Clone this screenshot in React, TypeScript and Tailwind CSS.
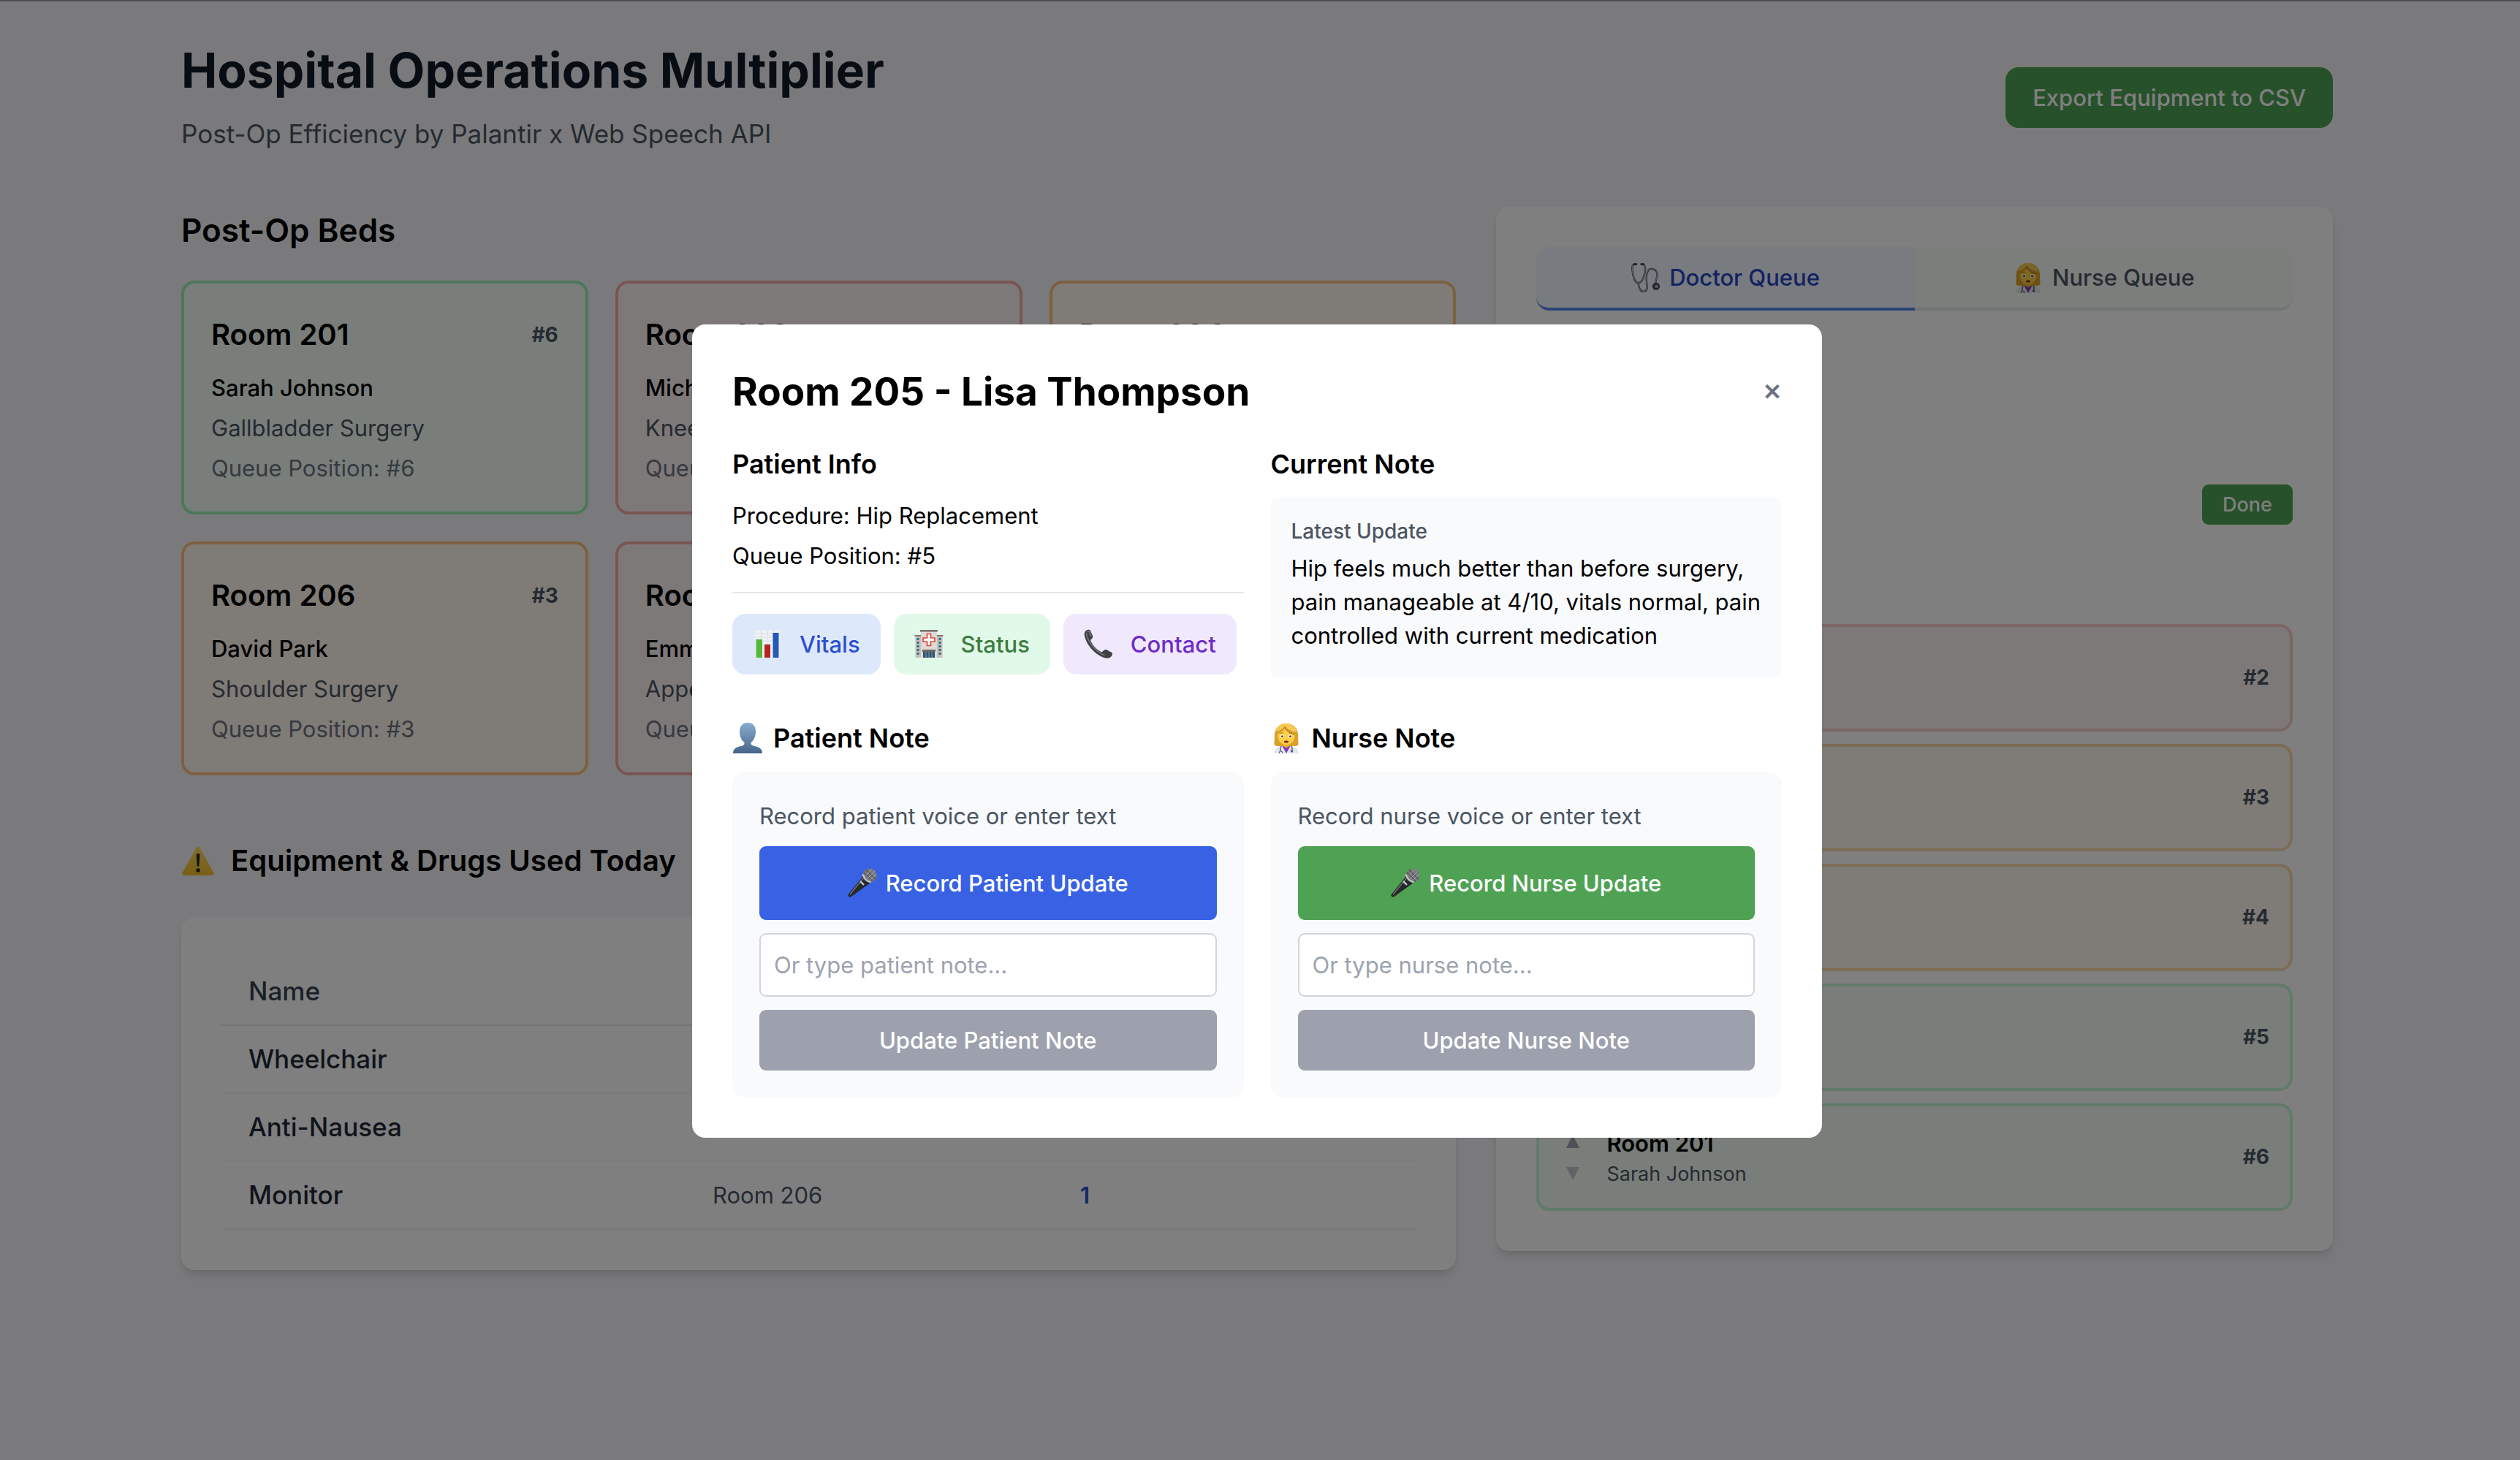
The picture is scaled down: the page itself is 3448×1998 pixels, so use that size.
import { useState } from "react";
import type { ReactNode } from "react";

type Tone = "green" | "red" | "orange";

const bedTone: Record<Tone, string> = {
  green: "border-[#98f0b2] bg-[#f2fdf5]",
  red: "border-[#f5a9a6] bg-[#fcf3f2]",
  orange: "border-[#f9c080] bg-[#fef7ee]",
};

const queueTone: Record<Tone, string> = {
  green: "border-[#c3f5d2] bg-[#f2fdf5]",
  red: "border-[#f7cbca] bg-[#fcf3f2]",
  orange: "border-[#fad8ab] bg-[#fef7ee]",
};

const beds: { room: string; name: string; procedure: string; pos: number; tone: Tone }[] = [
  { room: "Room 201", name: "Sarah Johnson", procedure: "Gallbladder Surgery", pos: 6, tone: "green" },
  { room: "Room 203", name: "Michael Chen", procedure: "Knee Surgery", pos: 1, tone: "red" },
  { room: "Room 204", name: "James Wilson", procedure: "Hernia Repair", pos: 4, tone: "orange" },
  { room: "Room 206", name: "David Park", procedure: "Shoulder Surgery", pos: 3, tone: "orange" },
  { room: "Room 207", name: "Emma Davis", procedure: "Appendectomy", pos: 2, tone: "red" },
  { room: "Room 205", name: "Lisa Thompson", procedure: "Hip Replacement", pos: 5, tone: "green" },
];

const equipment = [
  { name: "Wheelchair", room: "Room 205", qty: 1 },
  { name: "Anti-Nausea", room: "Room 201", qty: 1 },
  { name: "Monitor", room: "Room 206", qty: 1 },
];

function WarningIcon() {
  return (
    <svg viewBox="0 0 46 40" className="h-[40px] w-[46px]" aria-hidden="true">
      <defs>
        <linearGradient id="warn" x1="0" y1="0" x2="0" y2="1">
          <stop offset="0" stopColor="#fbd95a" />
          <stop offset="1" stopColor="#f3bf2c" />
        </linearGradient>
      </defs>
      <path d="M20.6 2.2a2.8 2.8 0 0 1 4.8 0l19 34a2.6 2.6 0 0 1-2.3 3.8H3.9a2.6 2.6 0 0 1-2.3-3.8z" fill="url(#warn)" />
      <path d="M20.6 12.5a2.4 2.4 0 0 1 4.8 0l-1 14a1.4 1.4 0 0 1-2.8 0z" fill="#2c2410" />
      <circle cx="23" cy="33" r="2.7" fill="#2c2410" />
    </svg>
  );
}

function StethoscopeIcon() {
  return (
    <svg viewBox="0 0 40 40" className="size-[40px]" fill="none" aria-hidden="true">
      <path d="M5.5 1.5C1.5 2 .8 4 1.4 9c.7 7 2.6 17 8 18.4 6-1 9-11 9.6-18C19.5 4 18.5 2 15 1.5" stroke="#4d5257" strokeWidth="2.4" />
      <path d="M5.5 1.5C1.5 2 .8 4 1.4 9c.7 7 2.6 17 8 18.4 6-1 9-11 9.6-18C19.5 4 18.5 2 15 1.5" stroke="#d5d9dc" strokeWidth="1" />
      <path d="M9.5 27c1 6 2 12 7 12 7 0 5-8 4.500-13-.6-6-.5-18 6.500-18 6 0 9 5 8 10-1 4-3 6-2 10" stroke="#4d5257" strokeWidth="2.4" />
      <path d="M9.5 27c1 6 2 12 7 12 7 0 5-8 4.500-13-.6-6-.5-18 6.500-18 6 0 9 5 8 10-1 4-3 6-2 10" stroke="#d5d9dc" strokeWidth="1" />
      <path d="M4 1.5h3M13.5 1.500h3" stroke="#30343a" strokeWidth="2.4" strokeLinecap="round" />
      <circle cx="34" cy="32" r="5" fill="#3a3d42" />
      <circle cx="34.5" cy="32" r="2.6" fill="#a9aeb3" />
    </svg>
  );
}

function NurseIcon() {
  return (
    <svg viewBox="0 0 42 42" className="size-[42px]" aria-hidden="true">
      <path d="M21 1C11 1 5.500 8 5 16c-.4 5 .2 8-.6 12-.3 2.500 1.600 4 4.600 4h24c3 0 4.900-1.500 4.600-4-.8-4-.2-7-.6-12C36.500 8 31 1 21 1z" fill="#dba02b" />
      <path d="M21 1C12 1 7.500 6 6 12c6-1 11-4 13-8 3 5 9 8 16.500 9C34 6 29 1 21 1z" fill="#f4c955" />
      <path d="M4.500 42c0-6 4-9 10-10h13c6 1 10 4 10 10z" fill="#e2e6ec" />
      <path d="M15.500 32L21 42l5.500-10z" fill="#8b35b8" />
      <path d="M17 27h8v5l-4 2.500-4-2.500z" fill="#eab42c" />
      <path d="M9.500 16c4.500-2 8-5 9.500-8 3 4 8 7 13.500 8 .8 8-4 14-11.500 14S8.700 24 9.500 16z" fill="#fbd043" />
      <path d="M18.500 6c3 5 8 9 14 10" stroke="#b9791d" strokeWidth="1.3" fill="none" />
      <ellipse cx="15.5" cy="18.5" rx="2.400" ry="2.600" fill="#fff" />
      <ellipse cx="26.500" cy="18.5" rx="2.400" ry="2.600" fill="#fff" />
      <circle cx="15.5" cy="18.7" r="1.500" fill="#5b3712" />
      <circle cx="26.500" cy="18.7" r="1.500" fill="#5b3712" />
      <path d="M13 14.800c1.200-1 3-1 4.200 0M24.800 14.800c1.200-1 3-1 4.200 0" stroke="#a8701c" strokeWidth="1" fill="none" />
      <ellipse cx="21" cy="26" rx="3" ry="1.500" fill="#7c2417" />
      <path d="M14 32c-1.500 3-1.500 4.500-.6 7M28 32c1.500 3 1.500 4.500.6 6" stroke="#5d6873" strokeWidth="1.500" fill="none" />
      <circle cx="28.500" cy="39" r="1.800" fill="#5d6873" />
      <path d="M11.500 42v-1.500c0-2 4-2 4 0V42" stroke="#5d6873" strokeWidth="1.200" fill="none" />
    </svg>
  );
}

function ChartIcon() {
  return (
    <svg viewBox="0 0 40 40" className="size-[40px]" aria-hidden="true">
      <rect x="3" y="1" width="34" height="38" fill="#eef1f5" />
      <path d="M3 6h34M3 11h34M3 16h34M3 21h34M3 26h34M3 31h34M11.5 1v38M20 1v38M28.5 1v38" stroke="#d6dbe2" strokeWidth="0.8" />
      <rect x="4.5" y="14" width="8.5" height="25" fill="#56b83a" />
      <rect x="16" y="21" width="8" height="18" fill="#b2241c" />
      <rect x="27.5" y="5" width="8" height="34" fill="#2459b8" />
    </svg>
  );
}

function HospitalIcon() {
  return (
    <svg viewBox="0 0 40 40" className="size-[40px]" aria-hidden="true">
      <rect x="1.5" y="9" width="37" height="30" fill="#c3c0b9" />
      <rect x="0.5" y="8" width="39" height="1.8" fill="#77746f" />
      <rect x="9" y="2" width="22" height="37" fill="#dcdad5" />
      <rect x="8" y="1" width="24" height="2.6" fill="#77746f" />
      <path d="M5 12v23M35 12v23" stroke="#41678a" strokeWidth="3" strokeDasharray="3 2" />
      <path d="M17.5 6.500h5v5.500H28v5h-5.500v5.500h-5V17H12v-5h5.500z" fill="#fff" stroke="#dc4640" strokeWidth="1.7" />
      <rect x="11" y="28" width="18" height="3" fill="#6d6a66" />
      <rect x="12" y="31" width="16" height="8" fill="#36536e" />
      <path d="M16 31v8M20 31v8M24 31v8" stroke="#86a3bb" strokeWidth="0.9" />
    </svg>
  );
}

function PhoneIcon() {
  return (
    <svg viewBox="0 0 40 40" className="size-[40px]" aria-hidden="true">
      <path
        d="M2 3C4 .5 7.500 0 9 2l3 7c.7 2-.3 3.600-2.200 5-.8.8-.6 2 0 3.200 3 5.600 7.500 10.300 12.500 13.400 1.500.8 2.500.9 3.500-.2 1.700-2 3.500-3 5.400-2.100l6.500 3.400c2 1.200 1.600 4-.6 6-2 1.800-4.600 2.700-7.600 1.800C16 36 3.500 22 .8 8.500.5 6 .8 4.400 2 3z"
        fill="#3f4245"
      />
      <path d="M3.500 5c1 12 12 25 25 31" stroke="#777b7f" strokeWidth="1.4" fill="none" />
      <path d="M5 3.500c1-1 2-1 2.600 0l2.400 6" stroke="#8f9397" strokeWidth="1.2" fill="none" />
    </svg>
  );
}

function PersonIcon() {
  return (
    <svg viewBox="0 0 42 42" className="size-[42px]" aria-hidden="true">
      <defs>
        <linearGradient id="bust" x1="0" y1="0" x2="0" y2="1">
          <stop offset="0" stopColor="#88add0" />
          <stop offset="1" stopColor="#48658a" />
        </linearGradient>
      </defs>
      <path
        d="M21 0c-7 0-11 4.600-11 12 0 7 2.500 12 6.200 14.800.8 2.700-.2 4.200-4.200 5.200-7 1.500-11 3.500-11 10h40c0-6.500-4-8.500-11-10-4-1-5-2.500-4.200-5.200C29.500 24 32 19 32 12 32 4.600 28 0 21 0z"
        fill="url(#bust)"
      />
    </svg>
  );
}

function MicIcon() {
  return (
    <svg viewBox="0 0 40 40" className="size-[40px]" aria-hidden="true">
      <path d="M21 11L1 35.500c-1 1.500-.6 2.500.3 3.400 1 .9 2.300 1 3.400.1L31 20z" fill="#26282b" />
      <path d="M22 13L3 36" stroke="#6d7074" strokeWidth="1.6" />
      <path d="M17 18l5 5" stroke="#c9ccd0" strokeWidth="2.4" />
      <circle cx="30" cy="10" r="9.5" fill="#77797c" />
      <path d="M22 6l12 12M25 2.500L37.500 15M21 11l8 8" stroke="#4c4e51" strokeWidth="1.2" />
      <path d="M24 17L37 4M21.500 13L33 1.500M28 19l11-11" stroke="#a5a8ab" strokeWidth="1" />
      <path d="M20.500 8.500c2 6 5 9.500 11 11" stroke="#c4c7ca" strokeWidth="2.2" fill="none" />
    </svg>
  );
}

function NotePanel({
  icon,
  title,
  who,
  recordClass,
}: {
  icon: ReactNode;
  title: string;
  who: string;
  recordClass: string;
}) {
  const [text, setText] = useState("");
  const label = who.charAt(0).toUpperCase() + who.slice(1);
  return (
    <section>
      <h3 className="flex items-center gap-[14px] text-[36px] leading-[55px] font-semibold">
        {icon}
        {title}
      </h3>
      <div className="mt-[18px] flex flex-col gap-[18px] rounded-[18px] bg-[#f9fafc] p-[37px]">
        <label htmlFor={`${who}-note`} className="text-[31px] leading-[47px] text-[#4b5563]">
          Record {who} voice or enter text
        </label>
        <button
          type="button"
          className={`flex items-center justify-center gap-[12px] rounded-[9px] py-[27px] text-[31px] leading-[47px] font-medium text-white ${recordClass}`}
        >
          <MicIcon />
          Record {label} Update
        </button>
        <input
          id={`${who}-note`}
          value={text}
          onChange={(e) => setText(e.target.value)}
          placeholder={`Or type ${who} note...`}
          className="w-full rounded-[9px] border-2 border-[#d1d5db] bg-white px-[18px] py-[18px] text-[31px] leading-[47px] placeholder:text-[#9ca3af]"
        />
        <button
          type="button"
          className="rounded-[9px] bg-[#9ca1ad] py-[18px] text-[31px] leading-[47px] font-medium text-white"
        >
          Update {label} Note
        </button>
      </div>
    </section>
  );
}

function Chip({ icon, label, className }: { icon: ReactNode; label: string; className: string }) {
  return (
    <button
      type="button"
      className={`flex items-center gap-[24px] rounded-[18px] px-[28px] py-[18px] text-[31px] leading-[47px] font-medium ${className}`}
    >
      {icon}
      {label}
    </button>
  );
}

function PatientDialog() {
  return (
    <div className="fixed inset-0 flex items-center justify-center bg-black/50 pt-[2px] pr-2">
      <div
        role="dialog"
        aria-modal="true"
        aria-labelledby="dialog-title"
        className="w-full max-w-[1546px] rounded-[18px] bg-white p-[55px]"
      >
        <header className="flex items-center justify-between">
          <h2 id="dialog-title" className="text-[53px] leading-[74px] font-bold">
            Room 205 - Lisa Thompson
          </h2>
          <button type="button" aria-label="Close" className="text-[31px] leading-[47px] font-bold text-[#6b7280]">
            ✕
          </button>
        </header>

        <div className="mt-[35px] grid grid-cols-2 gap-x-[37px] gap-y-[55px]">
          <section>
            <h3 className="text-[36px] leading-[55px] font-semibold">Patient Info</h3>
            <div className="mt-[18px] flex flex-col gap-[5px] text-[31px] leading-[50px]">
              <p>Procedure: Hip Replacement</p>
              <p>Queue Position: #5</p>
            </div>
            <div className="mt-[24px] flex gap-[18px] border-t-2 border-[#e5e7eb] pt-[28px]">
              <Chip icon={<ChartIcon />} label="Vitals" className="bg-[#dee8fb] text-[#2b4fcf]" />
              <Chip icon={<HospitalIcon />} label="Status" className="bg-[#e1f9e8] text-[#3d7c40]" />
              <Chip icon={<PhoneIcon />} label="Contact" className="bg-[#f0e8fc] text-[#6e2bc9]" />
            </div>
          </section>

          <section>
            <h3 className="text-[36px] leading-[55px] font-semibold">Current Note</h3>
            <div className="mt-[18px] rounded-[9px] bg-[#f9fafc] px-[28px] pt-[28px] pb-[35px]">
              <p className="text-[28px] leading-[37px] font-medium text-[#4b5563]">Latest Update</p>
              <p className="mt-[9px] text-[31px] leading-[46px]">
                Hip feels much better than before surgery, pain manageable at 4/10, vitals normal, pain controlled
                with current medication
              </p>
            </div>
          </section>

          <NotePanel icon={<PersonIcon />} title="Patient Note" who="patient" recordClass="bg-[#3862e3]" />
          <NotePanel icon={<NurseIcon />} title="Nurse Note" who="nurse" recordClass="bg-[#4fa254]" />
        </div>
      </div>
    </div>
  );
}

export default function App() {
  const queue = beds.filter((b) => b.pos > 1).sort((a, b) => a.pos - b.pos);
  return (
    <div className="min-h-screen border-t-2 border-[#a0a0a2] bg-[#f4f5f8] pr-2 font-['Inter',sans-serif] text-black">
      <div className="mx-auto max-w-[3054px] px-[55px] pt-[53px]">
        <header className="flex items-center justify-between">
          <div>
            <h1 className="text-[66px] leading-[83px] font-bold text-[#111827]">Hospital Operations Multiplier</h1>
            <p className="mt-[18px] text-[35px] leading-[55px] text-[#4b5563]">
              Post-Op Efficiency by Palantir x Web Speech API
            </p>
          </div>
          <button
            type="button"
            className="rounded-[18px] bg-[#4fa254] px-[37px] py-[18px] text-[31px] leading-[47px] font-medium text-white"
          >
            Export Equipment to CSV
          </button>
        </header>

        <main className="mt-[72px] grid grid-cols-5 items-start gap-[55px]">
          <div className="col-span-3">
            <h2 className="text-[44px] leading-[64px] font-semibold">Post-Op Beds</h2>
            <div className="mt-[37px] grid grid-cols-3 gap-[37px]">
              {beds.map((b) => (
                <article
                  key={b.room}
                  className={`rounded-[18px] border-4 px-[37px] pt-[38px] pb-[36px] ${bedTone[b.tone]}`}
                >
                  <div className="flex items-center justify-between">
                    <h3 className="text-[40px] leading-[64px] font-semibold">{b.room}</h3>
                    <span className="text-[28px] leading-[37px] font-bold text-[#4b5563]">#{b.pos}</span>
                  </div>
                  <div className="mt-[18px] flex flex-col gap-[9px] text-[31px] leading-[46px]">
                    <p className="font-medium">{b.name}</p>
                    <p className="text-[#4b5563]">{b.procedure}</p>
                    <p className="text-[#6b7280]">Queue Position: #{b.pos}</p>
                  </div>
                </article>
              ))}
            </div>

            <h2 className="mt-[76px] flex items-center gap-[22px] text-[40px] leading-[82px] font-semibold">
              <WarningIcon />
              Equipment &amp; Drugs Used Today
            </h2>
            <div className="mt-[37px] rounded-[18px] bg-white p-[55px] shadow-[0_9px_14px_-2px_rgba(0,0,0,0.1),0_4px_9px_-4px_rgba(0,0,0,0.1)]">
              <table className="w-full table-fixed text-left">
                <thead>
                  <tr className="border-b-2 border-[#e5e7eb] text-[35px] leading-[55px] text-[#374151]">
                    <th className="w-[635px] px-[37px] py-[18px] font-medium">Name</th>
                    <th className="w-[503px] px-[37px] py-[18px] font-medium">Room</th>
                    <th className="px-[37px] py-[18px] font-medium">Quantity</th>
                  </tr>
                </thead>
                <tbody>
                  {equipment.map((e) => (
                    <tr key={e.name} className="border-b-2 border-[#f3f4f6] text-[31px] leading-[55px]">
                      <td className="px-[37px] py-[18px] text-[35px] font-medium text-[#1f2937]">{e.name}</td>
                      <td className="px-[37px] py-[18px] text-[#4b5563]">{e.room}</td>
                      <td className="px-[37px] py-[18px] font-semibold text-[#2b4fcf]">{e.qty}</td>
                    </tr>
                  ))}
                </tbody>
              </table>
            </div>
          </div>

          <aside className="col-span-2 rounded-[18px] bg-white p-[55px] shadow-[0_9px_14px_-2px_rgba(0,0,0,0.1),0_4px_9px_-4px_rgba(0,0,0,0.1)]">
            <div role="tablist" className="grid grid-cols-2 text-[31px] leading-[47px] font-medium">
              <button
                type="button"
                role="tab"
                aria-selected="true"
                className="flex items-center justify-center gap-[12px] rounded-l-[18px] border-b-4 border-[#5486ec] bg-[#f0f6ff] py-[18px] text-[#2743c6]"
              >
                <StethoscopeIcon />
                Doctor Queue
              </button>
              <button
                type="button"
                role="tab"
                aria-selected="false"
                className="flex items-center justify-center gap-[12px] rounded-r-[18px] border-b-4 border-[#e5e7eb] bg-[#f8fcf9] py-[18px] text-[#4b5563]"
              >
                <NurseIcon />
                Nurse Queue
              </button>
            </div>

            <div className="mt-[74px] flex h-[355px] items-center justify-end pt-[28px]">
              <button
                type="button"
                className="rounded-[9px] bg-[#4fa254] px-[28px] py-[9px] text-[27px] leading-[37px] font-medium text-white"
              >
                Done
              </button>
            </div>

            <ul className="flex flex-col gap-[17px]">
              {queue.map((b) => (
                <li
                  key={b.room}
                  className={`flex items-center rounded-[18px] border-4 px-[28px] py-[28px] ${queueTone[b.tone]}`}
                >
                  <div className="flex w-[36px] flex-col items-center gap-[26px]">
                    <button type="button" aria-label={`Move ${b.room} up`} className="text-[#9ca3af]">
                      <svg viewBox="0 0 18 18" className="size-[18px]" aria-hidden="true">
                        <path d="M9 0l9 18H0z" fill="currentColor" />
                      </svg>
                    </button>
                    <button type="button" aria-label={`Move ${b.room} down`} className="text-[#c3c7ce]">
                      <svg viewBox="0 0 18 18" className="size-[18px]" aria-hidden="true">
                        <path d="M9 18L0 0h18z" fill="currentColor" />
                      </svg>
                    </button>
                  </div>
                  <div className="ml-[28px] flex-1">
                    <p className="text-[31px] leading-[46px] font-semibold">{b.room}</p>
                    <p className="text-[27px] leading-[37px] text-[#4b5563]">{b.name}</p>
                  </div>
                  <span className="text-[28px] leading-[37px] font-bold text-[#4b5563]">#{b.pos}</span>
                </li>
              ))}
            </ul>
          </aside>
        </main>
      </div>
      <PatientDialog />
    </div>
  );
}
